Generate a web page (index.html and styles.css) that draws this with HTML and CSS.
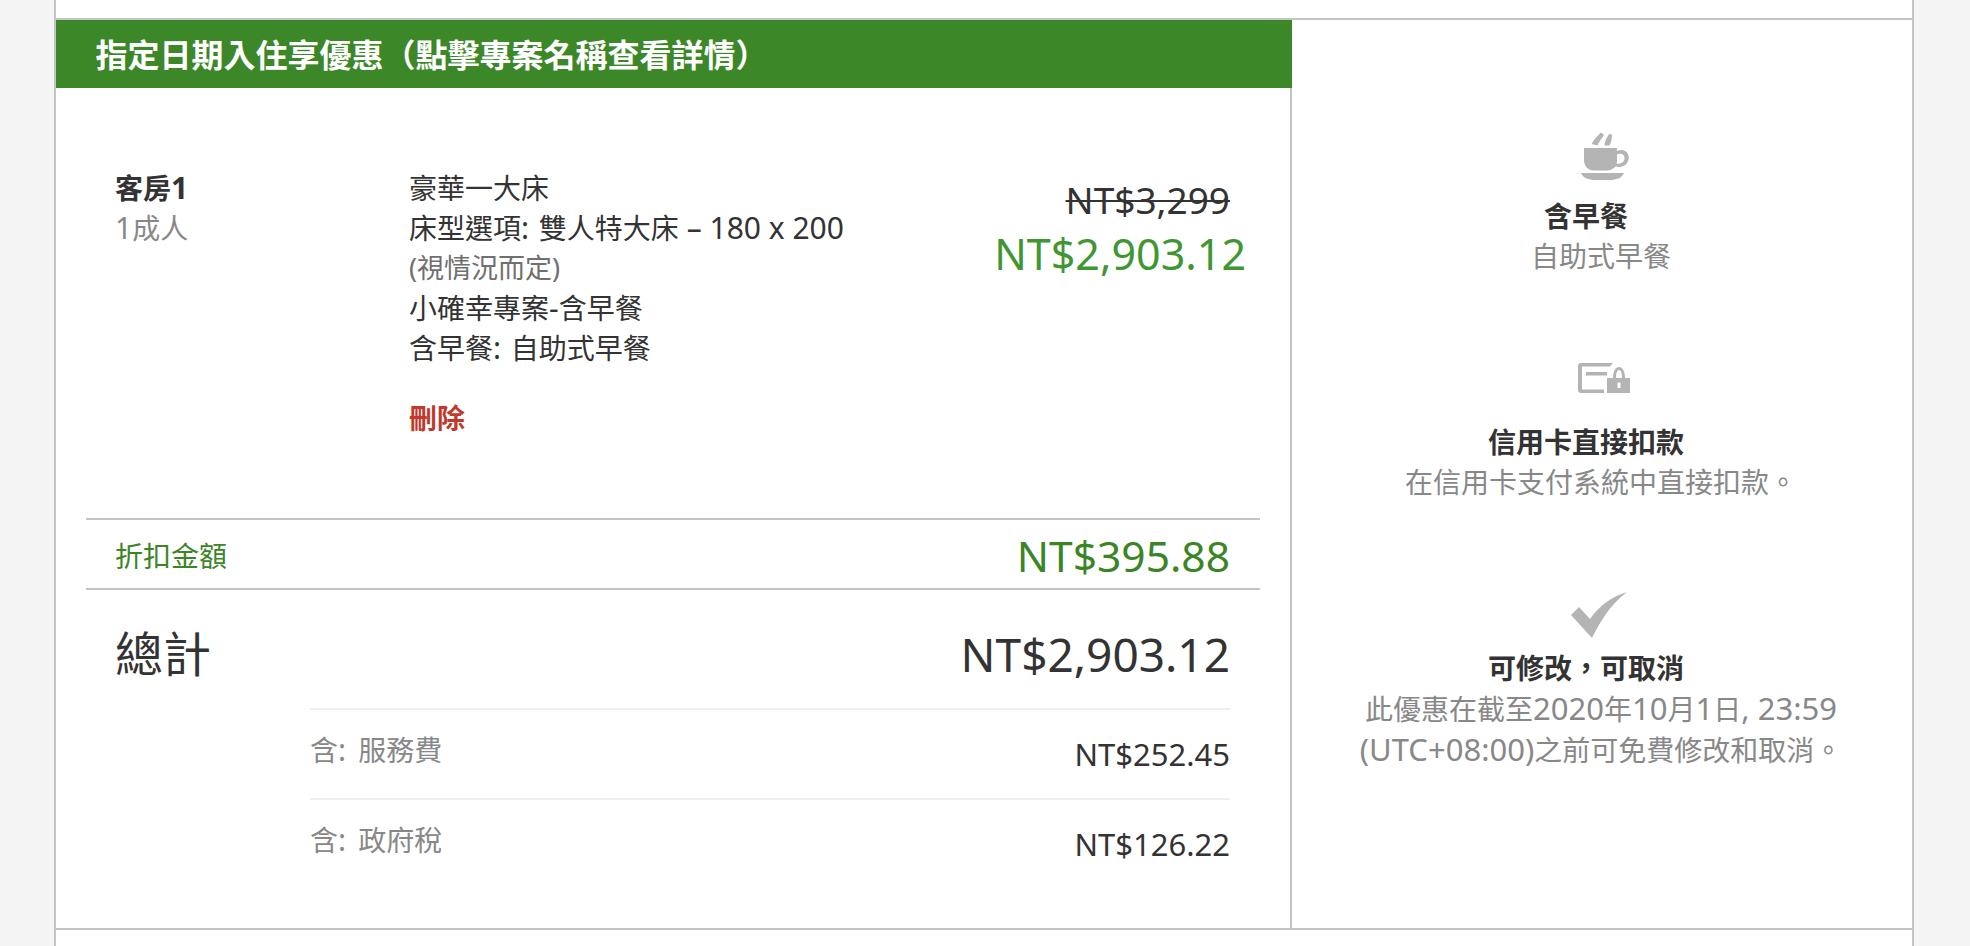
FILE: index.html
```html
<!DOCTYPE html>
<html lang="zh-Hant">
<head>
<meta charset="utf-8">
<title>訂房明細</title>
<link rel="stylesheet" href="styles.css">
</head>
<body>
<div class="card">
  <div class="main">
    <section class="offer">
      <h2 class="offer-title">指定日期入住享優惠（點擊專案名稱查看詳情）</h2>
      <div class="room">
        <div class="room-who">
          <div class="room-name">客房<span class="lat">1</span></div>
          <div class="muted"><span class="lat">1</span>成人</div>
        </div>
        <div class="room-info">
          <div>豪華一大床</div>
          <div>床型選項<span class="lat sep">: </span>雙人特大床<span class="lat"> – 180 x 200</span></div>
          <div class="note">(視情況而定)</div>
          <div>小確幸專案<span class="lat">-</span>含早餐</div>
          <div>含早餐<span class="lat sep">: </span>自助式早餐</div>
          <a class="remove">刪除</a>
        </div>
        <div class="room-price">
          <div class="old-price">NT$3,299</div>
          <div class="new-price">NT$2,903.12</div>
        </div>
      </div>
      <div class="discount">
        <span>折扣金額</span>
        <span class="discount-value">NT$395.88</span>
      </div>
      <div class="total">
        <div class="total-row">
          <span class="total-label">總計</span>
          <span class="total-value">NT$2,903.12</span>
        </div>
        <div class="fee">
          <span class="fee-label">含<span class="lat sep">: </span>服務費</span>
          <span class="fee-value">NT$252.45</span>
        </div>
        <div class="fee">
          <span class="fee-label">含<span class="lat sep">: </span>政府稅</span>
          <span class="fee-value">NT$126.22</span>
        </div>
      </div>
    </section>
    <aside class="perks">
      <div class="perk">
        <svg class="perk-icon" viewBox="0 0 70 76" aria-hidden="true">
          <path d="M18 28H51V31C58 28 64 33 62.500 39.500C61 46 55 48 49.500 46.500C47 49 44 50.500 41 50.500H28C22 50.500 18 46 18 40Z M51 34.500V41C51 42 50.800 43 50.500 43.500C54 44.500 58 43 58.500 38.800C59 34.500 55 32.800 51 34.500Z" fill-rule="evenodd"/>
          <path d="M15 53H58C56 58 50 60 44 60H29C23 60 17 58 15 53Z"/>
          <path d="M25.500 24C28 19.500 31 16 35 12.500L38 15C35.500 19 33 21.500 31.500 25.500Z M38.500 25.500C38.500 21 41 17.500 43.500 13.500L46 15C46 19 45 22.500 43.500 25.500Z"/>
        </svg>
        <div class="perk-title">含早餐</div>
        <div class="perk-desc">自助式早餐</div>
      </div>
      <div class="perk">
        <svg class="perk-icon" viewBox="0 0 70 76" aria-hidden="true">
          <path d="M15 17H47L44 20.500H16V43.500H38V47H15C13 47 12 46 12 44V20C12 18 13 17 15 17Z"/>
          <rect x="20" y="26" width="21" height="3.500"/>
          <path d="M46 32H47C47 25 49.500 21 53 21C56.500 21 59 25 59 32H64V47H41V32ZM50 32H56C56 27 55 24 53 24C51 24 50 27 50 32ZM51.500 36.500V42H54.500V36.500Z" fill-rule="evenodd"/>
        </svg>
        <div class="perk-title">信用卡直接扣款</div>
        <div class="perk-desc">在信用卡支付系統中直接扣款。</div>
      </div>
      <div class="perk">
        <svg class="perk-icon" viewBox="0 0 70 76" aria-hidden="true">
          <path d="M5 43L13 35L24 47C33 34 45 25 61 20C45 32 35 48 26 66Z"/>
        </svg>
        <div class="perk-title">可修改，可取消</div>
        <div class="perk-desc">此優惠在截至<span class="lat">2020</span>年<span class="lat">10</span>月<span class="lat">1</span>日<span class="lat">, 23:59</span><br><span class="lat">(UTC+08:00)</span>之前可免費修改和取消。</div>
      </div>
    </aside>
  </div>
</div>
</body>
</html>
```
FILE: styles.css
```css
html, body {
  margin: 0;
  height: 100%;
  overflow: hidden;
}
body {
  background: #f4f4f4;
  color: #333;
  font-family: "Noto Sans", "Noto Sans CJK TC", sans-serif;
  font-size: 28px;
  line-height: 40px;
}
.lat {
  font-size: 30px;
}
.sep {
  word-spacing: 2px;
}
.card {
  box-sizing: border-box;
  width: 1860px;
  height: 946px;
  margin-left: 54px;
  padding-top: 18px;
  background: #fff;
  border-left: 2px solid #c4c4c4;
  border-right: 2px solid #c4c4c4;
}
.main {
  display: flex;
  height: 912px;
  box-sizing: border-box;
  border-top: 2px solid #c4c4c4;
  border-bottom: 2px solid #c4c4c4;
}
.offer {
  box-sizing: border-box;
  width: 1236px;
  border-right: 2px solid #c4c4c4;
}
.offer-title {
  box-sizing: border-box;
  width: 1236px;
  height: 68px;
  margin: 0;
  padding-left: 39.500px;
  background: #3c8727;
  color: #fff;
  font-size: 32px;
  font-weight: 700;
  line-height: 69px;
}
.room {
  display: flex;
  height: 430px;
  box-sizing: border-box;
  margin: 0 30px;
  padding: 80px 30px 0 29px;
}
.room-who {
  width: 294px;
}
.room-name {
  font-weight: 700;
}
.muted {
  color: #888;
}
.room-info {
  flex: 1;
}
.note {
  font-size: 27px;
  color: #707070;
}
.remove {
  display: block;
  margin-top: 30px;
  color: #c0392b;
  font-weight: 700;
}
.room-price {
  text-align: right;
}
.old-price {
  margin-top: 12px;
  font-size: 37px;
  text-decoration: line-through;
  text-decoration-thickness: 2px;
}
.new-price {
  margin: 10px -16px 0 0;
  color: #409632;
  font-size: 43px;
  line-height: 48px;
}
.discount {
  display: flex;
  justify-content: space-between;
  align-items: center;
  box-sizing: border-box;
  height: 72px;
  margin: 0 30px;
  padding: 4px 30px 0 29px;
  border-top: 2px solid #c4c4c4;
  border-bottom: 2px solid #c4c4c4;
  color: #3b8526;
}
.discount-value {
  font-size: 42.500px;
}
.total {
  margin: 0 60px 0 59px;
}
.total-row {
  display: flex;
  justify-content: space-between;
  align-items: center;
  box-sizing: border-box;
  height: 118px;
  padding-top: 10px;
}
.total-label {
  font-size: 48px;
}
.total-value {
  font-size: 46px;
}
.fee {
  display: flex;
  justify-content: space-between;
  box-sizing: border-box;
  height: 90px;
  margin-left: 195px;
  padding-top: 20px;
  border-top: 2px solid #eee;
}
.fee-label {
  color: #888;
}
.fee-label .sep {
  word-spacing: 4.500px;
}
.fee-value {
  margin-top: 4px;
  font-size: 31px;
}
.perks {
  flex: 1;
  padding: 100px 2px 0 0;
  text-align: center;
}
.perk {
  height: 226px;
}
.perk-icon {
  display: block;
  width: 70px;
  height: 76px;
  margin: 0 auto;
  fill: #b4b4b4;
  filter: blur(0.7px);
}
.perk-title {
  padding-right: 30px;
  font-weight: 700;
}
.perk-desc {
  color: #888;
}
.perk-desc .lat {
  font-size: 31px;
}
```
